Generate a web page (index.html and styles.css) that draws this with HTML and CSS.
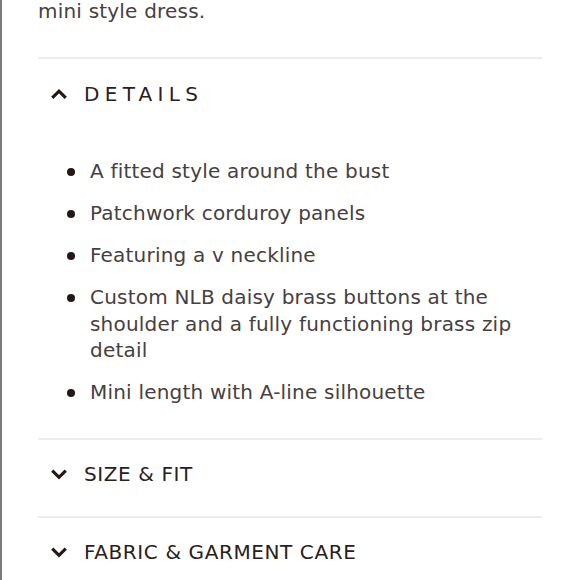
FILE: index.html
```html
<!DOCTYPE html>
<html lang="en">
<head>
    <meta charset="UTF-8">
    <meta name="viewport" content="width=device-width, initial-scale=1.0">
    <title>Product details</title>
    <link rel="stylesheet" href="styles.css">
</head>
<body>
    <div class="page">
        <p class="intro">mini style dress.</p>

        <div class="accordion">
            <div class="panel open">
                <div class="panel-head">
                    <svg class="chevron" viewBox="0 0 16 10"><path d="M2 8.5 L8 2.5 L14 8.5"/></svg>
                    <span class="panel-title spaced">DETAILS</span>
                </div>
                <ul class="panel-list">
                    <li>A fitted style around the bust</li>
                    <li>Patchwork corduroy panels</li>
                    <li>Featuring a v neckline</li>
                    <li>Custom NLB daisy brass buttons at the shoulder and a fully functioning brass zip detail</li>
                    <li>Mini length with A-line silhouette</li>
                </ul>
            </div>

            <div class="panel">
                <div class="panel-head">
                    <svg class="chevron" viewBox="0 0 16 10"><path d="M2 2 L8 8 L14 2"/></svg>
                    <span class="panel-title">SIZE &amp; FIT</span>
                </div>
            </div>

            <div class="panel">
                <div class="panel-head">
                    <svg class="chevron" viewBox="0 0 16 10"><path d="M2 2 L8 8 L14 2"/></svg>
                    <span class="panel-title">FABRIC &amp; GARMENT CARE</span>
                </div>
            </div>
        </div>
    </div>
</body>
</html>
```

FILE: styles.css
```css
:root {
    --textColor: #474040;
    --headColor: #2a201c;
    --lineColor: #ececec;
}

body {
    margin: 0;
    padding: 0;
    font-family: 'DejaVu Sans', sans-serif;
    background: #ffffff;
    color: var(--textColor);
    overflow: hidden;
}

.page {
    min-height: 580px;
    border-left: 2px solid #7a7a7a;
    padding-left: 36px;
    padding-right: 38px;
}

.intro {
    margin: -2px 0 0;
    font-size: 20px;
    line-height: 27px;
    letter-spacing: 0.2px;
}

.accordion {
    margin-top: 32px;
}

.panel {
    border-top: 2px solid var(--lineColor);
}

.panel-head {
    display: flex;
    align-items: center;
    gap: 16px;
    padding-left: 12px;
    padding-bottom: 7px;
    height: 69px;
    color: var(--headColor);
    font-size: 20px;
    letter-spacing: 0.6px;
}

.chevron {
    width: 18px;
    height: 12px;
    flex-shrink: 0;
    fill: none;
    stroke: #231815;
    stroke-width: 2.8;
}

.spaced {
    letter-spacing: 5.3px;
}

.panel-list {
    list-style: none;
    margin: 0;
    padding: 23px 0 32px 29px;
    font-size: 20px;
    line-height: 26.5px;
    letter-spacing: 0.2px;
    display: flex;
    flex-direction: column;
    gap: 15.5px;
}

.panel-list li {
    display: flex;
    gap: 15px;
}

.panel-list li::before {
    content: "";
    flex-shrink: 0;
    width: 8px;
    height: 8px;
    margin-top: 9.5px;
    border-radius: 50%;
    background: #231815;
}
```
